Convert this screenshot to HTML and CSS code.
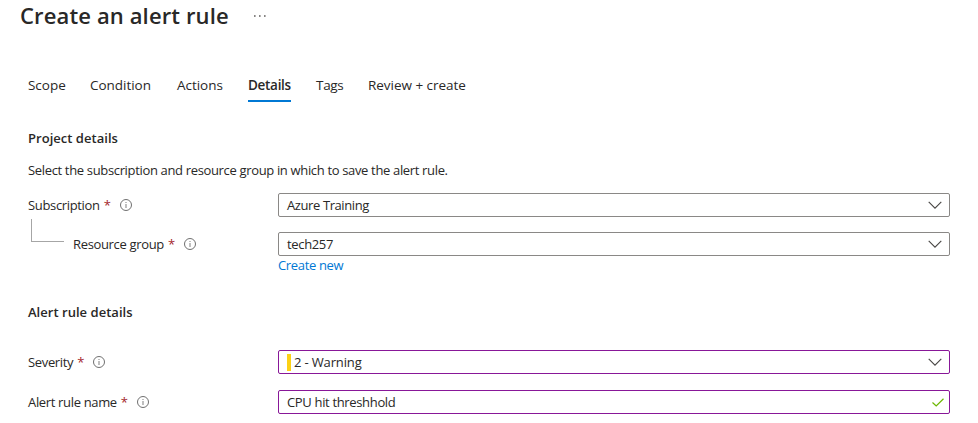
FILE: index.html
```html
<!DOCTYPE html>
<html lang="en">
<head>
<meta charset="utf-8">
<title>Create an alert rule</title>
<link rel="stylesheet" href="styles.css">
</head>
<body>
<svg class="defs" width="0" height="0" aria-hidden="true">
  <symbol id="info" viewBox="0 0 12 12"><circle cx="6" cy="6" r="5.5" fill="none" stroke="#707070"/><path d="M6 5v4M6 3v1" stroke="#8a8a8a" stroke-width="1.1"/></symbol>
  <symbol id="chevron" viewBox="0 0 14 8"><path d="M.7.8 7 7.1 13.3.8" fill="none" stroke="#484644" stroke-width="1.1"/></symbol>
</svg>
<header class="header">
  <h1 class="title">Create an alert rule</h1>
  <svg class="more" width="12" height="2" viewBox="0 0 12 2"><path d="M0 1h1.6M5 1h1.6M10 1h1.6" stroke="#605e5c" stroke-width="1.4"/></svg>
</header>
<nav class="tabs">
  <a class="tab scope">Scope</a>
  <a class="tab condition">Condition</a>
  <a class="tab actions">Actions</a>
  <a class="tab details">Details</a>
  <a class="tab tags">Tags</a>
  <a class="tab review">Review + create</a>
</nav>
<main class="form">
  <h2 class="heading project">Project details</h2>
  <p class="intro">Select the subscription and resource group in which to save the alert rule.</p>
  <div class="row">
    <label class="label"><span class="name">Subscription</span><span class="required">*</span><svg class="info"><use href="#info"/></svg></label>
    <div class="field"><span class="value azure">Azure Training</span><svg class="chevron"><use href="#chevron"/></svg></div>
  </div>
  <div class="row group-row">
    <label class="label"><span class="branch"></span><span class="name">Resource group</span><span class="required">*</span><svg class="info"><use href="#info"/></svg></label>
    <div class="field"><span class="value tech">tech257</span><svg class="chevron"><use href="#chevron"/></svg></div>
  </div>
  <a class="create">Create new</a>
  <h2 class="heading alert">Alert rule details</h2>
  <div class="row">
    <label class="label"><span class="name">Severity</span><span class="required">*</span><svg class="info"><use href="#info"/></svg></label>
    <div class="field changed"><span class="severity"></span><span class="value warning">2 - Warning</span><svg class="chevron"><use href="#chevron"/></svg></div>
  </div>
  <div class="row name-row">
    <label class="label"><span class="name">Alert rule name</span><span class="required">*</span><svg class="info"><use href="#info"/></svg></label>
    <div class="field changed"><span class="value">CPU hit threshhold</span><svg class="check" viewBox="0 0 12 9"><path d="M.5 4.5 4.2 8 11.5.8" fill="none" stroke="#6bb700" stroke-width="1.2"/></svg></div>
  </div>
</main>
</body>
</html>
```

FILE: styles.css
```css
* { box-sizing: border-box; }
body {
  margin: 0;
  height: 423px;
  overflow: hidden;
  background: #fff;
  color: #292827;
  font: 13px/20px "Open Sans", "Noto Sans", sans-serif;
  letter-spacing: -0.34px;
  white-space: nowrap;
}
h1, h2, p { margin: 0; }
.defs { display: none; }
.header { display: flex; align-items: center; height: 32px; padding-left: 20px; }
.title { width: 234px; margin-top: -2px; font-size: 22px; font-weight: 600; line-height: 32px; letter-spacing: 0.13px; }
.tabs { display: flex; height: 70px; padding: 43px 0 0 28px; font-size: 13.5px; letter-spacing: -0.03px; }
.tab { height: 27px; }
.scope { width: 62px; }
.condition { width: 87px; }
.actions { width: 71px; }
.details { width: 43px; margin-right: 25px; border-bottom: 2px solid #0078d4; font-weight: 600; letter-spacing: -0.3px; }
.tags { width: 52px; letter-spacing: -0.3px; }
.form { width: 950px; padding: 26px 0 0 28px; }
.heading { font-size: 13px; font-weight: 600; line-height: 20px; letter-spacing: 0.03px; }
.intro { margin: 12px 0 13px; }
.row { display: flex; height: 24px; }
.label { display: flex; align-items: center; width: 250px; }
.required { width: 6px; margin-left: 4px; color: #a4262c; }
.info { width: 12px; height: 12px; margin-left: 10px; }
.group-row { margin-top: 15px; }
.branch { width: 33px; height: 23px; margin: -28px 9px 0 3px; border: solid #a6a6a6; border-width: 0 0 1px 1px; }
.field { display: flex; align-items: center; flex: 1; border: 1px solid #8a8886; border-radius: 2px; padding: 0 8px; }
.azure { letter-spacing: -0.4px; }
.warning { letter-spacing: -0.15px; }
.changed { border-color: #881798; }
.chevron { width: 14px; height: 8px; margin: 0 -1px 0 auto; }
.create { display: block; width: 65px; height: 20px; margin: -1px 0 0 250px; color: #0078d4; }
.alert { margin: 27px 0 28px; }
.severity { width: 4px; height: 17px; margin-right: 3px; background: #fcd116; }
.name-row { margin-top: 16px; }
.check { width: 12px; height: 9px; margin: 0 -3px 0 auto; }
```
